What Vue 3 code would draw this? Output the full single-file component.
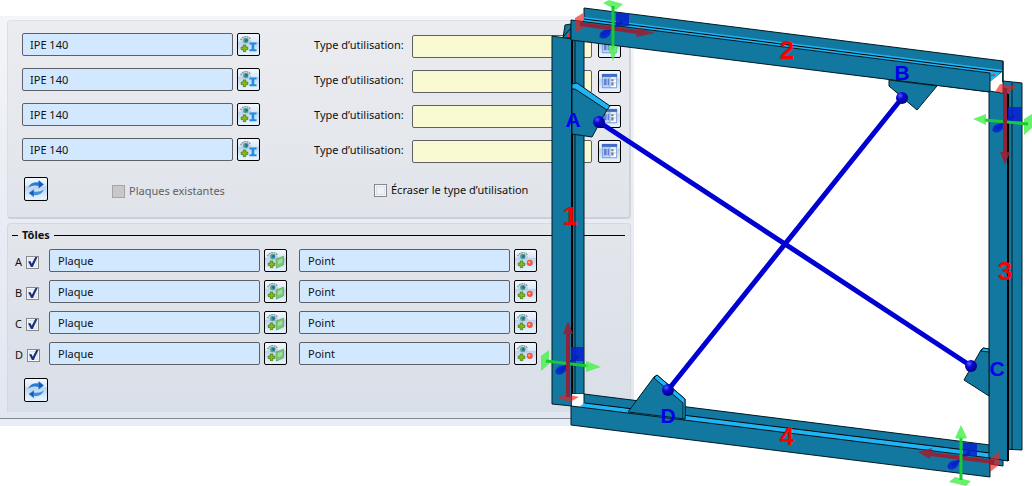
<script setup>
import { reactive } from 'vue'

const profiles = reactive([
  { id: 1, name: 'IPE 140', usage: '' },
  { id: 2, name: 'IPE 140', usage: '' },
  { id: 3, name: 'IPE 140', usage: '' },
  { id: 4, name: 'IPE 140', usage: '' },
])

const plates = reactive([
  { id: 'A', on: true, plate: 'Plaque', point: 'Point' },
  { id: 'B', on: true, plate: 'Plaque', point: 'Point' },
  { id: 'C', on: true, plate: 'Plaque', point: 'Point' },
  { id: 'D', on: true, plate: 'Plaque', point: 'Point' },
])
</script>

<template>
  <main class="stage">
    <svg class="sprite" aria-hidden="true">
      <defs>
        <symbol id="eye" viewBox="0 0 20 20">
          <path d="M1.500 5.500Q6.500 -1.500 12.500 4.500" fill="none" stroke="#87939a" stroke-width="1.400" stroke-dasharray="2 .6" />
          <path d="M2.500 6.500Q6.500 1 12.500 6.500Q7 10 2.500 6.500Z" fill="#eef6f2" stroke="#a3b2b5" stroke-width=".7" />
          <circle cx="7.200" cy="5.700" r="2.900" fill="#4aa594" />
          <circle cx="7.800" cy="5.700" r="1.400" fill="#2464a6" />
          <path d="M4.500 10.500h2.600v2.200h2.200v2.600h-2.200v2.200h-2.600v-2.200h-2.200v-2.600h2.200z" fill="#82bc14" stroke="#4d7a14" stroke-width=".8" />
        </symbol>
        <symbol id="beam" viewBox="0 0 20 20">
          <use href="#eye" />
          <path d="M11 8h7.500v2h-2.400v5h2.400v2h-7.500v-2h2.300v-5h-2.300z" fill="#1e8fe0" />
        </symbol>
        <symbol id="sheet" viewBox="0 0 20 20">
          <use href="#eye" />
          <path d="M10.500 8.500L18.500 5.500V14.500L11 18Z" fill="#7cc57a" stroke="#5aa860" stroke-width=".8" />
          <path d="M12.500 10L17 8V12L12.500 14Z" fill="#a4dc9c" />
        </symbol>
        <symbol id="dot" viewBox="0 0 20 20">
          <use href="#eye" />
          <circle cx="14.500" cy="12.500" r="3.200" fill="#f4553c" />
          <path d="M12.500 12l1.500-1.500 1.500 1.500-1.500 1.500z" fill="#ffb5a4" />
        </symbol>
        <symbol id="book" viewBox="0 0 20 20">
          <rect x="2" y="2" width="16" height="15" rx="1" fill="#7d9fdc" />
          <rect x="2" y="2" width="16" height="3" fill="#3f6cc0" />
          <path d="M3 5.500h7v10.500H3z" fill="#c5d7f5" />
          <path d="M11 5.500h6v10.500h-6z" fill="#fff" />
          <path d="M4 7h3v7H4zM8 7h1.500v7H8z" fill="#5b83d0" />
          <path d="M12 7.500h2v2h-2zM12 11h2v3h-2zM15 7.500h1.500M15 11.500h1.500" fill="#7486a8" stroke="#7486a8" stroke-width=".6" />
        </symbol>
        <symbol id="refresh" viewBox="0 0 20 20">
          <path d="M2 8.500Q5 2.500 12.500 3.200V1L18 5.500L12.500 9.500V7Q7 5.500 2 8.500Z" fill="#2a7bd0" />
          <path d="M18 10.500Q15 17 8 16V18.500L2.500 14L8 10V12.500Q13 13.500 18 10.500Z" fill="#3f92e2" />
          <path d="M13 2L17 5.500L13 8.500ZM7.500 11.500L3.500 14L7.500 17Z" fill="#1559b4" />
        </symbol>
      </defs>
    </svg>

    <form class="dialog" @submit.prevent>
      <section class="panel profiles">
        <div class="left">
          <div v-for="p in profiles" :key="p.id" class="pick">
            <input v-model="p.name" class="field" type="text" :aria-label="`Profil ${p.id}`" />
            <button type="button" class="tool" :aria-label="`Choisir le profil ${p.id}`"><svg><use href="#beam" /></svg></button>
          </div>
          <div class="foot">
            <button type="button" class="tool big" aria-label="Actualiser les profils"><svg><use href="#refresh" /></svg></button>
            <label class="check muted"><input type="checkbox" disabled /><span>Plaques existantes</span></label>
          </div>
        </div>
        <div class="right">
          <div v-for="p in profiles" :key="p.id" class="usage">
            <label :for="`usage-${p.id}`">Type d’utilisation:</label>
            <input :id="`usage-${p.id}`" v-model="p.usage" class="field yellow" type="text" />
            <button type="button" class="tool" :aria-label="`Liste des types ${p.id}`"><svg><use href="#book" /></svg></button>
          </div>
          <label class="check override"><input type="checkbox" /><span>Écraser le type d’utilisation</span></label>
        </div>
      </section>

      <section class="panel sheets">
        <h2>Tôles</h2>
        <div v-for="r in plates" :key="r.id" class="sheet-row">
          <label class="check letter"><span>{{ r.id }}</span><input v-model="r.on" type="checkbox" /></label>
          <div class="pick">
            <input v-model="r.plate" class="field" type="text" :aria-label="`Plaque ${r.id}`" />
            <button type="button" class="tool" :aria-label="`Choisir la plaque ${r.id}`"><svg><use href="#sheet" /></svg></button>
          </div>
          <div class="pick">
            <input v-model="r.point" class="field" type="text" :aria-label="`Point ${r.id}`" />
            <button type="button" class="tool" :aria-label="`Choisir le point ${r.id}`"><svg><use href="#dot" /></svg></button>
          </div>
        </div>
        <button type="button" class="tool big" aria-label="Actualiser les tôles"><svg><use href="#refresh" /></svg></button>
      </section>
      <div class="status"></div>
    </form>

    <svg class="scene" viewBox="540 0 492 486" role="img" aria-label="Cadre contreventé">
      <defs>
        <radialGradient id="ball" cx=".35" cy=".3" r=".8">
          <stop offset="0" stop-color="#5a5aff" />
          <stop offset=".35" stop-color="#0a0ad8" />
          <stop offset="1" stop-color="#000070" />
        </radialGradient>
      </defs>

      <g class="steel">
        <path d="M565 25L571 24V38H563Z" />
        <path class="warn" d="M567 33H569V37H567Z" />
        <path d="M563 37L571 28" />
        <path d="M552 36L572 39V406L552 404Z" />
        <path d="M572 38H584V394H572Z" />
        <path d="M575 38V394" />
        <path class="thick" d="M572 38V400" />

        <path class="void" d="M572 394H585V406H572Z" />
        <path d="M584 394L990 445V458L584 408Z" />
        <path class="lit web" d="M585 403L990 453V458L585 408L580 406Z" />
        <path class="edge" d="M585 403L990 453" />
        <path d="M571 406L990 458V477L571 425Z" />

        <path d="M1003 81L1022 83V450L1003 449Z" />
        <path d="M1012 83V449" />
        <path d="M990 458H1003V466L990 464Z" />

        <path d="M584 8L1003 61V81L990 92L584 40Z" />
        <path class="lit web" d="M584 17L1003 70L990 82L984 76L584 24Z" />
        <path class="edge" d="M584 19L1002 72" />
        <path class="void" d="M990 82L1002 72V92H990Z" />
        <path class="warn" d="M991 75L995 74V76H991Z" />
        <path d="M1003 61V81" />
        <path d="M571 20L990 73V92L571 40Z" />
        <path d="M989 91L1008 94V461L989 458Z" />
        <path class="thick" d="M1008 94V461" />

        <path d="M572 86L575 83L609 106L592 137L572 134Z" />
        <path class="lit" d="M572 84L577 83L610 106L607 110L575 89H572Z" />
        <path d="M889 80V86L917 110L937 86Z" />
        <path d="M989 396L964 380L981 350L983 348L989 349Z" />
        <path class="lit" d="M981 351L983 348L989 349V352Z" />
        <path d="M628 412L654 377L657 375L685 399V419Z" />
        <path class="lit" d="M654 378L657 375L685 399V419H683V403Z" />
      </g>

      <g class="axes">
        <path class="blue" d="M616 13H629V26H616Z" />
        <path class="blue-rod" d="M622 22L602 35" />
        <ellipse class="blue" cx="605" cy="34" rx="6" ry="4" transform="rotate(-30 605 34)" />
        <path class="red" d="M575 18L583 13V28L575 33Z" />
        <path class="red-rod" d="M580 24L638 32" />
        <path class="red-head" d="M638 28L655 33L636 37Z" />
        <path class="green" d="M603 3L609 0L623 4L616 10Z" />
        <path class="green-rod" d="M613 6V48" />
        <path class="green" d="M608 47Q613 44 618 47L613 61Z" />

        <path class="blue" d="M1008 107H1022V121H1008Z" />
        <path class="blue-rod" d="M1014 116L996 129" />
        <ellipse class="blue" cx="998" cy="128" rx="6" ry="4" transform="rotate(-30 998 128)" />
        <path class="green" d="M1024 119L1032 114V128L1024 135Z" />
        <path class="green-rod" d="M984 120L1028 124" />
        <path class="green" d="M973 119L986 114V125Z" />
        <path class="red" d="M995 92L1000 84L1016 86L1009 93Z" />
        <path class="red-rod" d="M1005 88V153" />
        <path class="red-head" d="M1000 152H1010L1005 165Z" />

        <path class="blue" d="M571 347H584V361H571Z" />
        <path class="blue-rod" d="M578 356L560 371" />
        <ellipse class="blue" cx="561" cy="370" rx="6" ry="4" transform="rotate(-30 561 370)" />
        <path class="green" d="M541 356L549 350V364L541 371Z" />
        <path class="green-rod" d="M546 361L588 366" />
        <path class="green" d="M586 361L601 367L586 372Z" />
        <path class="red" d="M557 398L566 394L579 397L570 402Z" />
        <path class="red-rod" d="M568 397V333" />
        <path class="red-head" d="M563 334H573L568 321Z" />

        <path class="blue" d="M963 443H977V456H963Z" />
        <path class="blue-rod" d="M970 452L952 466" />
        <ellipse class="blue" cx="953" cy="465" rx="6" ry="4" transform="rotate(-30 953 465)" />
        <path class="red" d="M990 459L999 451V465L990 472Z" />
        <path class="red-rod" d="M994 462L930 454" />
        <path class="red-head" d="M918 452L932 448L930 459Z" />
        <path class="green" d="M949 482L955 477L971 481L966 486Z" />
        <path class="green-rod" d="M961 480V437" />
        <path class="green" d="M955 438Q961 440 967 438L961 425Z" />
      </g>

      <g class="braces">
        <path d="M599 122L971 366M902 98L668 390" />
        <circle cx="599" cy="122" r="6" />
        <circle cx="971" cy="366" r="6" />
        <circle cx="902" cy="98" r="6" />
        <circle cx="668" cy="390" r="6" />
      </g>

      <g class="marks">
        <text x="573" y="127">A</text>
        <text x="902" y="80">B</text>
        <text x="997" y="376">C</text>
        <text x="668" y="423">D</text>
      </g>
      <g class="marks numbers">
        <text x="570" y="225">1</text>
        <text x="787" y="59">2</text>
        <text x="1005" y="280">3</text>
        <text x="787" y="445">4</text>
      </g>
    </svg>
  </main>
</template>

<style>
body {
  margin: 0;
  background: #fff;
}
</style>

<style scoped>
.stage {
  display: grid;
  grid-template-columns: minmax(540px, 1fr) 94px 398px;
  align-items: start;
  font: 11px/16px "Noto Sans", "Open Sans", sans-serif;
  color: #111;
}
.sprite {
  position: absolute;
  width: 0;
  height: 0;
}
.dialog {
  grid-area: 1 / 1 / 2 / 3;
  margin-top: 16px;
  padding: 4px 3px 0 7px;
  background: linear-gradient(#f3f5fa, #e9ecf4 50%, #e1e7f1);
}
.scene {
  grid-area: 1 / 2 / 2 / 4;
  display: block;
  width: 100%;
  z-index: 1;
  pointer-events: none;
}
.panel {
  box-sizing: border-box;
  border: 1px solid #d5d8de;
}
.profiles {
  display: flex;
  justify-content: space-between;
  padding: 12px 8px 16px 14px;
  border-width: 1px 2px 2px 1px;
  border-color: #dfe1e6 #d0d3d8 #ccd0d5 #dcdee3;
  border-radius: 4px;
  background: linear-gradient(#ebecf0, #e0e4ea);
}
.left,
.right {
  display: flex;
  flex-direction: column;
  gap: 12px;
}
.right {
  padding-top: 2px;
}
.pick {
  display: flex;
  gap: 4px;
}
.usage {
  display: flex;
  align-items: flex-start;
  gap: 6px;
}
.usage label {
  width: 92px;
  line-height: 20px;
  white-space: nowrap;
}
.field {
  box-sizing: border-box;
  width: 211px;
  height: 23px;
  margin: 0;
  padding: 0 7px;
  border: 1px solid #5d6167;
  border-radius: 2px;
  background: #d1e8ff;
  font: inherit;
  color: inherit;
}
.yellow {
  width: 180px;
  background: #fafad2;
}
.sheet-row .field {
  padding: 0 8px;
}
.tool {
  box-sizing: border-box;
  flex: none;
  width: 23px;
  height: 23px;
  margin: 0;
  padding: 1px;
  border: 1px solid #000;
  border-radius: 2px;
  background: linear-gradient(#f2f8ff, #dce9f8 35%, #bcd2ee 40%, #e2f1fd 90%);
}
.tool svg {
  display: block;
  width: 100%;
  height: 100%;
}
.big {
  width: 24px;
  height: 24px;
}
.foot {
  display: flex;
  gap: 64px;
  padding: 4px 0 0 2px;
}
.check {
  display: flex;
  align-items: center;
  gap: 4px;
  white-space: nowrap;
}
.foot .check {
  padding-top: 4px;
}
.check input {
  appearance: none;
  box-sizing: border-box;
  flex: none;
  width: 13px;
  height: 13px;
  margin: 0;
  border: 1px solid #85888e;
  background: #f0f1f4;
  box-shadow: inset 0 0 0 1px #f8f8fa, inset 0 0 0 2px #dfe1e5;
}
.check input:checked {
  display: grid;
}
.check input:checked::after {
  content: "";
  width: 11px;
  height: 11px;
  background: #14307e;
  clip-path: polygon(10% 45%, 30% 42%, 43% 65%, 75% 5%, 95% 5%, 52% 95%, 36% 95%);
}
.muted {
  color: #5e6064;
}
.muted input {
  border-color: #a5a5a5;
  background: #c8c8c8;
  box-shadow: none;
}
.override {
  padding: 7px 0 0 60px;
}
.sheets {
  display: flex;
  flex-direction: column;
  gap: 8px;
  margin-top: 4px;
  padding: 3px 5px 10px 4px;
  border-bottom: 0;
  border-radius: 4px 4px 0 0;
  background: linear-gradient(#e3e6eb, #d9dfe8);
}
.sheets h2 {
  display: flex;
  align-items: center;
  gap: 4px;
  margin: 0 0 -2px;
  font-size: 11px;
  line-height: 16px;
  font-weight: 700;
}
.sheets h2::before,
.sheets h2::after {
  content: "";
  width: 6px;
  height: 1px;
  background: #000;
}
.sheets h2::after {
  flex: 1;
}
.sheet-row {
  display: flex;
  gap: 12px;
  padding-left: 3px;
}
.letter {
  justify-content: space-between;
  width: 24px;
  margin-right: -2px;
  padding-top: 3px;
}
.sheets > .tool {
  margin: 5px 0 0 12px;
}
.status {
  height: 7px;
  margin: 6px -3px 0 -7px;
  border-top: 1px solid #858a92;
  background: #e8eef8;
}
.steel path {
  fill: #12789f;
  stroke: #001a24;
  stroke-width: 1;
}
.steel .lit {
  fill: #1fb5f5;
}
.steel .web {
  stroke: none;
}
.steel .void {
  fill: #fff;
  stroke: none;
}
.steel .warn {
  fill: #f03020;
  stroke: none;
}
.steel .edge {
  stroke: #000;
}
.steel .thick {
  stroke: #000;
  stroke-width: 2;
}
.axes .red {
  fill: #f02020;
  opacity: 0.65;
}
.axes .red-head {
  fill: #a01c30;
  opacity: 0.85;
}
.axes .red-rod {
  stroke: #92243a;
  stroke-width: 4;
}
.axes .green {
  fill: #4df050;
  opacity: 0.85;
}
.axes .green-rod {
  stroke: #18c838;
  stroke-width: 3;
}
.axes .blue {
  fill: #0820d0;
  opacity: 0.85;
}
.axes .blue-rod {
  stroke: #0820b8;
  stroke-width: 3;
}
.braces path {
  fill: none;
  stroke: #0000d2;
  stroke-width: 5;
}
.braces circle {
  fill: url(#ball);
}
.marks {
  fill: #0000f0;
  font: bold 21px "Liberation Sans", Arial, sans-serif;
  text-anchor: middle;
}
.numbers {
  fill: #f00;
  font-size: 26px;
}
</style>
